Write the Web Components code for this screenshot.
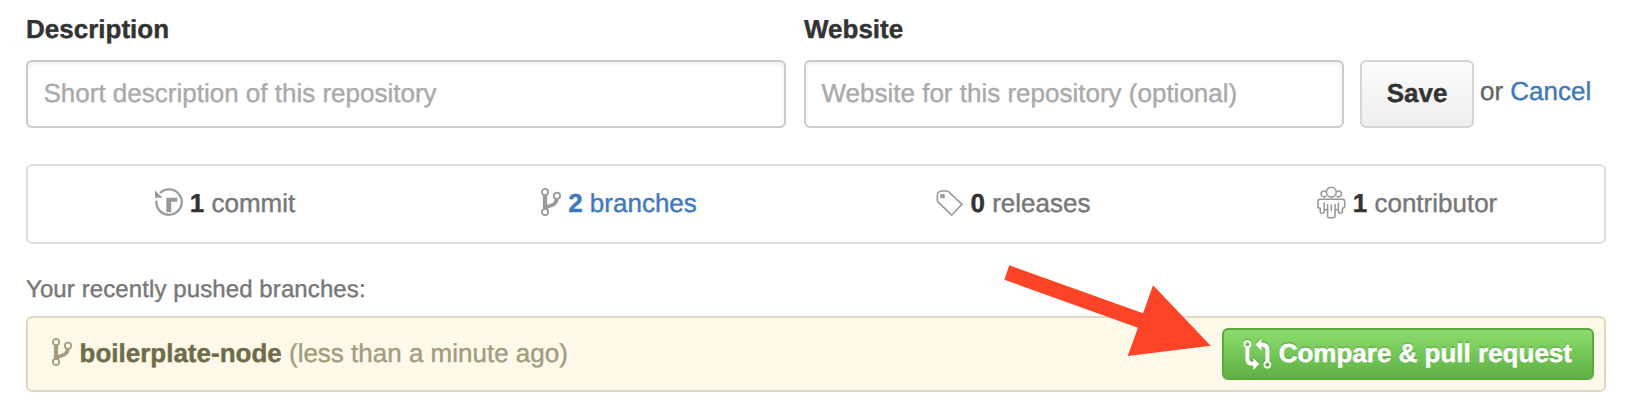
<!DOCTYPE html>
<html lang="en">
<head>
<meta charset="utf-8">
<title>Repository</title>
<style>
html,body{margin:0;background:#fff}
body{font:26px/40px "Liberation Sans",Arial,Helvetica,sans-serif;color:#333;text-rendering:geometricPrecision;-webkit-text-stroke:.4px;width:1626px;height:408px;overflow:hidden}
</style>
</head>
<body>
<repo-page></repo-page>
<script>
const ICONS = {
  history: [28, 28, '<path d="M1.4 12.6A12.7 12.7 0 1 0 5 5.1" fill="none" stroke="currentColor" stroke-width="2.2"/><path fill="currentColor" d="M0 2.5V9.8H7.8ZM11.3 9.7H22.3V13.7H16.2V24.3H11.3Z"/>'],
  branch: [20, 28, '<g fill="none" stroke="currentColor"><circle cx="4" cy="4" r="3.1" stroke-width="1.8"/><circle cx="16" cy="7.8" r="3.1" stroke-width="1.8"/><circle cx="4" cy="24" r="3.1" stroke-width="1.8"/><path d="M4 7.3V20.8" stroke-width="4.2"/><path d="M15.6 11C15.6 16.8 11 17.2 8.2 18Q5.6 18.8 4.8 20.4" stroke-width="3.8"/></g>'],
  tag: [27, 27, '<path d="M1.3 6Q1.3 1 6.2 1H10.4Q11.8 1 12.8 1.9L26 14.3L15.7 25.2L2.2 12.2Q1.3 11.2 1.3 9.8Z" fill="none" stroke="currentColor" stroke-width="1.6"/><path fill="currentColor" d="M4.3 4H8.7V8.3H4.3Z"/>'],
  people: [29, 33, '<g fill="none" stroke="currentColor" stroke-width="1.6" stroke-linejoin="round"><circle cx="14.3" cy="6.2" r="4.9"/><path d="M9.1 9.9A2.9 2.9 0 1 1 9.1 6M19.5 9.9A2.9 2.9 0 1 0 19.5 6"/><path d="M7.2 16.5V25.5Q7.2 27.2 5.6 27.2H4.8Q3.2 27.2 3.2 25.6V22.4Q.9 22 .9 20V15.5Q.9 13.2 3.2 13.2H25.4Q27.7 13.2 27.7 15.5V20Q27.7 22 25.4 22.4V25.6Q25.4 27.2 23.8 27.2H23Q21.4 27.2 21.4 25.5V16.5"/><path d="M7.4 23.6Q10.6 24 10.6 22.5V18.5V30Q10.6 31.7 12.3 31.7H16.3Q18 31.7 18 30V18.5V22.5Q18 24 21.2 23.6M14.3 18.5V25"/></g>'],
  pull: [29, 33, '<g fill="none" stroke="currentColor"><circle cx="4.4" cy="6.2" r="3" stroke-width="1.8"/><circle cx="24.4" cy="26.6" r="3" stroke-width="1.8"/><path d="M4.4 9.5V20.5Q4.4 25.8 9.5 25.8H11M24.4 23.2V12Q24.4 6.8 19.3 6.8H18" stroke-width="4"/></g><path fill="currentColor" d="M10.3 20L16.3 25.8L10.3 32ZM18.4 .7L12.4 6.6L18.4 12.6Z"/>']
};

function define(name, html, setup) {
  const template = document.createElement('template');
  template.innerHTML = html;
  customElements.define(name, class extends HTMLElement {
    constructor() {
      super();
      this.attachShadow({mode: 'open'}).append(template.content.cloneNode(true));
    }
    connectedCallback() { if (setup) setup(this, this.shadowRoot); }
  });
}

define('oct-icon', `<style>:host{display:block;flex:none}svg{display:block;overflow:visible}</style><svg aria-hidden="true"></svg>`, (el, root) => {
  const [w, h, body] = ICONS[el.getAttribute('name')];
  const svg = root.querySelector('svg');
  svg.setAttribute('width', w);
  svg.setAttribute('height', h);
  svg.setAttribute('viewBox', `0 0 ${w} ${h}`);
  svg.innerHTML = body;
});

define('text-field', `<style>
:host{display:block}
.label{font-weight:bold;height:51px;padding-top:9px;box-sizing:content-box}
.box{box-sizing:border-box;height:68px;border:2px solid #ccc;border-radius:6px;padding:11px 15.5px;color:#aaa;box-shadow:inset 0 2px 4px rgba(0,0,0,.075);white-space:nowrap}
</style><div class="label"><slot name="label"></slot></div><div class="box"><slot></slot></div>`);

define('plain-button', `<style>
:host{display:block;box-sizing:border-box;width:114px;height:68px;border:2px solid #d5d5d5;border-radius:6px;background:linear-gradient(#fcfcfc,#eee);font-weight:bold;text-align:center;padding-top:11px;text-shadow:0 2px 0 rgba(255,255,255,.9)}
</style><slot></slot>`);

define('primary-button', `<style>
:host{display:flex;box-sizing:border-box;width:372px;height:52px;border:2px solid #5ca941;border-radius:6px;background:linear-gradient(#8add6d,#60b044);color:#fff;font-weight:bold;text-shadow:0 -2px 0 rgba(0,0,0,.15);padding:3px 0 0 19px;white-space:nowrap}
oct-icon{margin:4.5px 6.7px 0 0;filter:drop-shadow(0 -2px 0 rgba(0,0,0,.12))}
</style><oct-icon name="pull"></oct-icon><span><slot></slot></span>`);

define('stats-bar', `<style>
:host{display:grid;grid-template-columns:repeat(4,1fr);box-sizing:border-box;height:80px;border:2px solid #ddd;border-radius:6px}
</style><slot></slot>`);

define('stat-item', `<style>
:host{display:flex;justify-content:center;align-items:center;color:#777;white-space:nowrap}
:host([link]){color:#4078c0}
oct-icon{color:#999;margin:0 7px 4px 0}
:host([icon=tag]) oct-icon{margin:0 8px 1px 0}
b{color:#333}
:host([link]) b{color:inherit}
span{padding-bottom:2px}
</style><span><b></b> <slot></slot></span>`, (el, root) => {
  root.querySelector('b').textContent = el.getAttribute('count');
  const icon = document.createElement('oct-icon');
  icon.setAttribute('name', el.getAttribute('icon'));
  root.querySelector('span').before(icon);
});

define('branch-notice', `<style>
:host{display:flex;align-items:flex-start;box-sizing:border-box;height:76px;border:2px solid #dfd8c2;border-radius:6px;background:#fff9ea;color:#a19d7f;padding:10px 10px 0 24px;white-space:nowrap}
.name{flex:1;padding-top:5px}
oct-icon{margin:10px 7.5px 0 0}
</style><oct-icon name="branch"></oct-icon><span class="name"><slot></slot></span><slot name="action"></slot>`);

define('pointer-arrow', `<style>
:host{display:block;position:absolute;left:1004px;top:265px;width:207px;height:92px}
svg{display:block}
</style><svg width="207" height="92" aria-hidden="true"><path fill="#fe4427" d="M5.3 .3L139 48.3L149 20.3L206.7 80.7L123.7 91L134 62.7L.3 14.7Z"/></svg>`);

define('repo-page', `<style>
:host{display:block;position:relative;width:1580px;padding:0 20px 0 26px}
.form{display:flex;height:128px}
.desc{width:760px;margin-right:18px}
.site{width:540px;margin-right:16px}
.save{margin-top:60px}
.cancel{margin:71px 0 0 6px;line-height:40px;color:#666;white-space:nowrap}
a{color:#4078c0;text-decoration:none}
stats-bar{margin-top:36px}
.pushed{font-size:24px;letter-spacing:.1px;color:#777;padding-top:26px;height:46px}
b{color:#6d6d4b}
</style>
<div class="form">
<text-field class="desc"><span slot="label">Description</span>Short description of this repository</text-field>
<text-field class="site"><span slot="label">Website</span>Website for this repository (optional)</text-field>
<plain-button class="save">Save</plain-button>
<div class="cancel">or <a>Cancel</a></div>
</div>
<stats-bar>
<stat-item icon="history" count="1">commit</stat-item>
<stat-item icon="branch" count="2" link>branches</stat-item>
<stat-item icon="tag" count="0">releases</stat-item>
<stat-item icon="people" count="1">contributor</stat-item>
</stats-bar>
<div class="pushed">Your recently pushed branches:</div>
<branch-notice><b>boilerplate-node</b> (less than a minute ago)<primary-button slot="action">Compare &amp; pull request</primary-button></branch-notice>
<pointer-arrow></pointer-arrow>`);
</script>
</body>
</html>
